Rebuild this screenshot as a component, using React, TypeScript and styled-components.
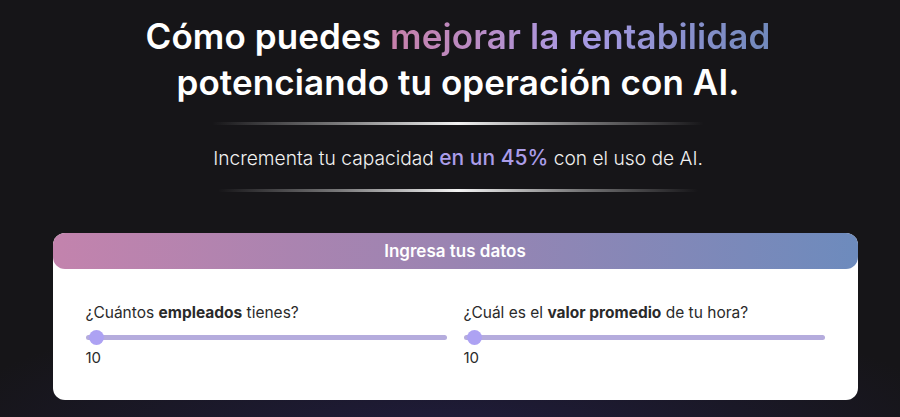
import styled, { createGlobalStyle } from "styled-components";

const GlobalStyle = createGlobalStyle`
    html, body {
        margin:0;
        padding:0;
        background:#161518;
    }
    body {
        font-family: Inter, "Noto Sans", sans-serif;
    }
`

const Page = styled.div`
    width:900px;
    height:417px;
    overflow:hidden;
    box-sizing:border-box;
    padding:13px 0 0 16px;
    display:flex;
    flex-direction:column;
    align-items:center;
    background:
        radial-gradient(ellipse 520px 140px at 50% 105%, rgba(40,34,90,0.55), rgba(22,21,24,0) 100%),
        #161518;
`

const Title = styled.h1`
    margin:0;
    text-align:center;
    color:#ffffff;
    font-size:35px;
    font-weight:600;
    line-height:46px;
    letter-spacing:0.1px;
`

const GradientText = styled.span`
    background:linear-gradient(90deg, #c780aa 0%, #a99ae4 50%, #7189bb 100%);
    -webkit-background-clip:text;
    background-clip:text;
    color:transparent;
`

const Divider = styled.div<{ $width: number }>`
    width:${(p) => p.$width}px;
    height:3px;
    border-radius:2px;
    background:linear-gradient(90deg, rgba(255,255,255,0) 0%, rgba(200,200,200,0.55) 25%, #f2f2f2 50%, rgba(200,200,200,0.55) 75%, rgba(255,255,255,0) 100%);
`

const TopDivider = styled(Divider)`
    margin-top:17px;
`

const Subtitle = styled.p`
    margin:19px 0 17px;
    color:#f1f1f1;
    font-size:19.2px;
    font-weight:300;
    line-height:28px;
`

const Highlight = styled.span`
    color:#ab9de9;
    font-size:21px;
    font-weight:500;
`

const Card = styled.section`
    margin:41px 6px 0 0;
    width:805px;
    height:167px;
    background:#ffffff;
    border-radius:12px;
    display:flex;
    flex-direction:column;
`

const CardHeader = styled.div`
    height:36px;
    border-radius:12px;
    background:linear-gradient(90deg, #c383ad 0%, #9a84b2 50%, #6d8bbd 100%);
    display:flex;
    align-items:center;
    justify-content:center;
    color:#ffffff;
    font-size:17px;
    font-weight:600;
`

const Fields = styled.div`
    display:grid;
    grid-template-columns:1fr 1fr;
    column-gap:17px;
    padding:35px 33px 0;
`

const Field = styled.div`
    display:flex;
    flex-direction:column;
`

const Label = styled.label`
    color:#2a2a2a;
    font-size:15.5px;
    font-weight:400;
    line-height:18px;
    b {
        font-weight:700;
    }
`

const Track = styled.div`
    position:relative;
    margin-top:13px;
    height:5px;
    border-radius:3px;
    background:#b5acdd;
`

const Thumb = styled.span`
    position:absolute;
    left:3px;
    top:50%;
    width:15px;
    height:15px;
    margin-top:-7.5px;
    border-radius:50%;
    background:#ada2f3;
`

const Value = styled.span`
    margin-top:9px;
    color:#2a2a2a;
    font-size:15px;
    line-height:18px;
`

function SliderField({ before, bold, after, value }: { before: string; bold: string; after: string; value: number }) {
    return (
        <Field>
            <Label>
                {before}<b>{bold}</b>{after}
            </Label>
            <Track>
                <Thumb />
            </Track>
            <Value>{value}</Value>
        </Field>
    )
}

export default function App() {
    return (
        <>
            <GlobalStyle />
            <Page>
                <Title>
                    Cómo puedes <GradientText>mejorar la rentabilidad</GradientText>
                    <br />
                    potenciando tu operación con AI.
                </Title>
                <TopDivider $width={492} />
                <Subtitle>
                    Incrementa tu capacidad <Highlight>en un 45%</Highlight> con el uso de AI.
                </Subtitle>
                <Divider $width={480} />
                <Card>
                    <CardHeader>Ingresa tus datos</CardHeader>
                    <Fields>
                        <SliderField before="¿Cuántos " bold="empleados" after=" tienes?" value={10} />
                        <SliderField before="¿Cuál es el " bold="valor promedio" after=" de tu hora?" value={10} />
                    </Fields>
                </Card>
            </Page>
        </>
    )
}
